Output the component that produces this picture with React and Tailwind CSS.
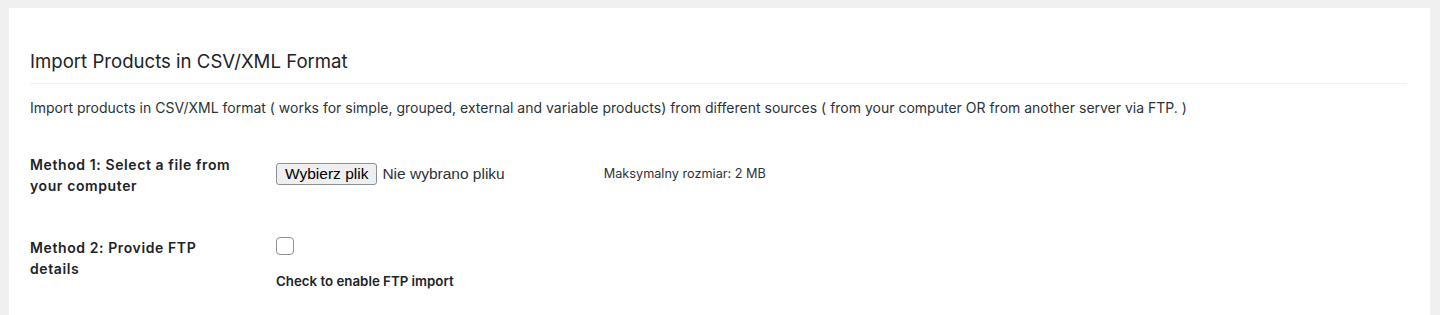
export default function App() {
  return (
    <div className="w-[1440px] h-[315px] bg-[#f0f0f1] pt-[8px] pl-[9px] pr-[10px] overflow-hidden" style={{ fontFamily: 'Inter, "Noto Sans", sans-serif' }}>
      <div className="bg-white h-full pl-[21px] pr-[23px] pt-[39px] text-[#1d2327]">
        <h2 className="text-[18.6px] leading-[28px] font-normal border-b border-[#f0f0f1] pb-[8px]">Import Products in CSV/XML Format</h2>
        <p className="text-[14px] leading-[20px] text-[#2c3338] mt-[14px]">
          Import products in CSV/XML format ( works for simple, grouped, external and variable products) from different sources ( from your computer OR from another server via FTP. )
        </p>
        <div className="flex mt-[36px]">
          <div className="w-[246px] pr-[36px] text-[14px] leading-[21px] font-semibold tracking-[0.6px]">Method 1: Select a file from your computer</div>
          <div className="flex items-center h-[22px] mt-[9px]">
            <button className="h-[22px] px-[8px] border border-[#8c8f94] rounded-[3px] bg-[#efefef] text-[15.5px] leading-[20px] text-black" style={{ fontFamily: '"Liberation Sans", Arial, sans-serif' }}>Wybierz plik</button>
            <span className="ml-[5px] text-[15.5px] text-[#2c3338]" style={{ fontFamily: '"Liberation Sans", Arial, sans-serif' }}>Nie wybrano pliku</span>
            <span className="ml-[99px] text-[12.7px] text-[#2c3338]">Maksymalny rozmiar: 2 MB</span>
          </div>
        </div>
        <div className="flex mt-[41px]">
          <div className="w-[246px] pr-[36px] text-[14px] leading-[21px] font-semibold tracking-[0.6px]">Method 2: Provide FTP details</div>
          <div className="flex flex-col">
            <div className="w-[18px] h-[18px] border border-[#8c8f94] rounded-[4px] bg-white"></div>
            <div className="text-[13.3px] font-semibold mt-[17px] leading-[18px]">Check to enable FTP import</div>
          </div>
        </div>
      </div>
    </div>
  );
}
